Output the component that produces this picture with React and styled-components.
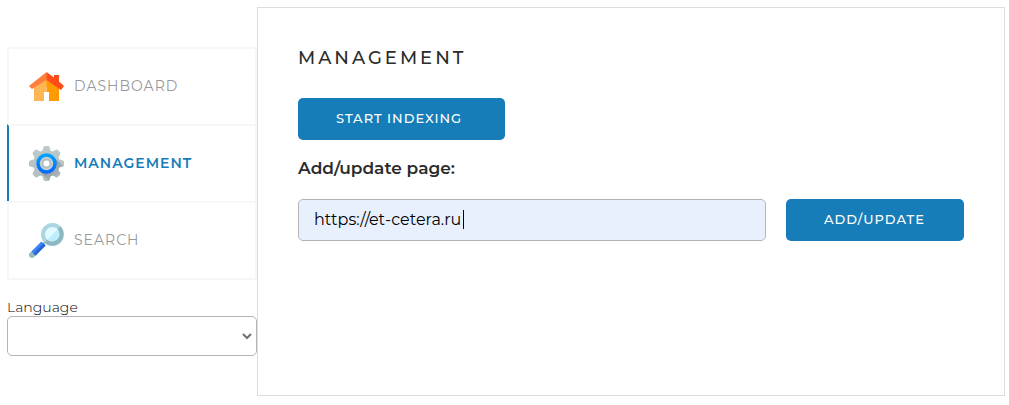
import React, { useState } from "react";
import styled, { createGlobalStyle } from "styled-components";

const GlobalStyle = createGlobalStyle`
  *, *::before, *::after { box-sizing: border-box; }
  body {
    margin: 0;
    background: #fff;
    color: #2c2c2c;
    font: 400 14px/18px Montserrat, Inter, "Open Sans", sans-serif;
  }
  button, input, select { font: inherit; }
`;

const Page = styled.div`
  display: flex;
  align-items: stretch;
  min-height: 100vh;
  padding: 7px 4px 9px 7px;
`;

const Sidebar = styled.aside`
  flex: 0 0 250px;
  padding-top: 40px;
`;

const Nav = styled.nav`
  border-bottom: 2px solid #f7f7f7;
  margin-bottom: 18px;
`;

const NavLink = styled.a`
  display: flex;
  align-items: center;
  gap: 10px;
  height: 77px;
  padding: 0 18px 0 20px;
  border: 2px solid #f7f7f7;
  border-bottom: 0;
  border-left-color: ${(p) => (p.$active ? "#167db8" : "#f7f7f7")};
  color: ${(p) => (p.$active ? "#167db8" : "#999")};
  font-size: 14px;
  line-height: 20px;
  font-weight: ${(p) => (p.$active ? 600 : 400)};
  letter-spacing: 1px;
  text-transform: uppercase;
  text-decoration: none;

  svg { flex: none; }
`;

const NavText = styled.span`
  padding-bottom: 2px;
`;

const LanguageLabel = styled.label`
  display: block;
  color: #000;
  font-weight: 300;
`;

const SelectWrap = styled.div`
  position: relative;

  svg {
    position: absolute;
    top: 16px;
    right: 5px;
    pointer-events: none;
  }
`;

const LanguageSelect = styled.select`
  appearance: none;
  display: block;
  width: 100%;
  height: 40px;
  padding: 0 20px 0 15px;
  border: 1px solid #b5b5b5;
  border-radius: 5px;
  background: #fff;
  color: #2c2c2c;
`;

const Panel = styled.main`
  flex: 1;
  min-width: 0;
  padding: 40px;
  border: 1px solid #ddd;
`;

const Title = styled.h1`
  margin: 0 0 30px;
  font-size: 18px;
  line-height: 20px;
  font-weight: 500;
  letter-spacing: 3px;
  text-transform: uppercase;
`;

const Button = styled.button`
  flex: none;
  min-width: ${(p) => p.$width}px;
  height: 42px;
  padding: 0 38px 2px;
  border: 0;
  border-radius: 5px;
  background: #167db8;
  color: #fff;
  font-size: 13px;
  font-weight: 500;
  letter-spacing: 1px;
  text-align: left;
  text-transform: uppercase;
`;

const FieldLabel = styled.label`
  display: block;
  margin: 18px 0 20px;
  font-size: 17px;
  line-height: 21px;
  font-weight: 600;
`;

const FieldRow = styled.div`
  display: flex;
  gap: 20px;
`;

const InputWrap = styled.div`
  position: relative;
  flex: 1;
  min-width: 0;
`;

const TextInput = styled.input`
  display: block;
  width: 100%;
  height: 42px;
  padding: 0 15px 2px;
  border: 1px solid #b5b5b5;
  border-radius: 5px;
  outline: 0;
  background: #e8f0fe;
  color: #000;
  font-size: 16px;
  font-weight: 400;
`;

const Caret = styled.span`
  position: absolute;
  top: 11px;
  left: 165px;
  width: 1px;
  height: 19px;
  background: #000;
  pointer-events: none;
`;

const HouseIcon = () => (
  <svg width="35" height="35" viewBox="0 0 35 35" aria-hidden="true">
    <path fill="#ffb655" d="M5 14 18 5v13h-3v14H5z" />
    <path fill="#ff9b00" d="M17.500 5 30 15v17H20V23h-2.500z" />
    <path fill="#ffb655" d="M15 18h2.500v5H15z" />
    <path fill="#fff" d="M15 23h5v9h-5z" />
    <path fill="#ff7d3e" d="M17.500 3v8L3 20 0 17z" />
    <path fill="#ff4d1a" d="M17.500 3 25 8.500V6h5v6.500l5 4.500-3 4-14.500-10z" />
  </svg>
);

const TEETH = [0, 45, 90, 135, 180, 225, 270, 315];

const GearIcon = () => (
  <svg width="35" height="35" viewBox="0 0 35 35" aria-hidden="true">
    <defs>
      <linearGradient id="gearBody" x1="0" y1="0" x2="0" y2="1">
        <stop offset="0" stopColor="#bdc9ca" />
        <stop offset="1" stopColor="#b2bec0" />
      </linearGradient>
      <linearGradient id="gearShade" x1="0" y1="0" x2="1" y2="1">
        <stop offset=".3" stopColor="#7f8e94" />
        <stop offset=".85" stopColor="#7f8e94" stopOpacity="0" />
      </linearGradient>
      <linearGradient id="gearRing" x1="0" y1="0" x2="0" y2="1">
        <stop offset="0" stopColor="#00a2ff" />
        <stop offset="1" stopColor="#006aff" />
      </linearGradient>
      <clipPath id="gearShape">
        <circle cx="17.500" cy="17.500" r="13.500" />
        {TEETH.map((angle) => (
          <path
            key={angle}
            d="M13 6 14.500 1Q15 0 16 0h3Q20 0 20.500 1L22 6z"
            transform={`rotate(${angle} 17.500 17.500)`}
          />
        ))}
      </clipPath>
    </defs>
    <g clipPath="url(#gearShape)">
      <path fill="url(#gearBody)" d="M0 0h35v35H0z" />
      <path fill="url(#gearShade)" d="M24 11 35 21v14H20L10 24z" />
    </g>
    <circle cx="17.500" cy="17.500" r="8.500" fill="#c6d1d2" stroke="url(#gearRing)" strokeWidth="3.500" />
    <circle cx="17.500" cy="17.500" r="4" fill="#fff" stroke="#b5bec2" strokeWidth="2" />
  </svg>
);

const MagnifierIcon = () => (
  <svg width="35" height="35" viewBox="0 0 35 35" aria-hidden="true">
    <path stroke="#8fb3bb" strokeWidth="2" d="m14 21 4-4" />
    <path stroke="#91bac3" strokeWidth="6" strokeLinecap="round" d="m3 32 3-3" />
    <path stroke="#3c83f6" strokeWidth="6" d="M4.500 30.500 14.500 20.500" />
    <path stroke="#2864d8" strokeWidth="3" d="M5.500 31.500 15.500 21.500" />
    <circle cx="23.500" cy="11.500" r="9.500" fill="#e1faff" stroke="#acd5df" strokeWidth="4" />
    <path fill="#bceeff" d="M28.500 6.500a7.100 7.100 0 0 1-10 10z" />
    <path fill="none" stroke="#8fb7c0" strokeWidth="4" d="M30.200 4.800a9.500 9.500 0 0 1-13.400 13.400" />
  </svg>
);

const ChevronIcon = () => (
  <svg width="10" height="8" viewBox="0 0 10 8" aria-hidden="true">
    <path fill="none" stroke="#707070" strokeWidth="2" d="M1 2l4 4 4-4" />
  </svg>
);

const ITEMS = [
  { label: "Dashboard", href: "#dashboard", Icon: HouseIcon },
  { label: "Management", href: "#management", Icon: GearIcon, active: true },
  { label: "Search", href: "#search", Icon: MagnifierIcon },
];

const INITIAL_URL = "https://et-cetera.ru";

export default function App() {
  const [url, setUrl] = useState(INITIAL_URL);

  return (
    <>
      <GlobalStyle />
      <Page>
        <Sidebar>
          <Nav>
            {ITEMS.map(({ label, href, Icon, active }) => (
              <NavLink key={label} href={href} $active={active} aria-current={active ? "page" : undefined}>
                <Icon />
                <NavText>{label}</NavText>
              </NavLink>
            ))}
          </Nav>
          <LanguageLabel htmlFor="language">Language</LanguageLabel>
          <SelectWrap>
            <LanguageSelect id="language" />
            <ChevronIcon />
          </SelectWrap>
        </Sidebar>
        <Panel>
          <Title>Management</Title>
          <Button type="button" $width={207}>Start indexing</Button>
          <FieldLabel htmlFor="page-url">Add/update page:</FieldLabel>
          <FieldRow>
            <InputWrap>
              <TextInput
                id="page-url"
                type="text"
                value={url}
                onChange={(e) => setUrl(e.target.value)}
              />
              {url === INITIAL_URL && <Caret />}
            </InputWrap>
            <Button type="button" $width={178}>Add/update</Button>
          </FieldRow>
        </Panel>
      </Page>
    </>
  );
}
